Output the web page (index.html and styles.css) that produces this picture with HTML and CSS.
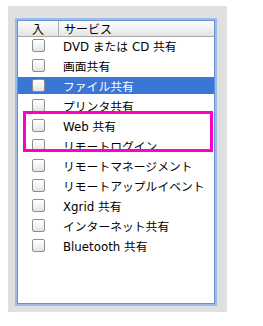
FILE: index.html
```html
<!DOCTYPE html>
<html lang="ja">

<head>
    <meta charset="UTF-8">
    <title>サービス</title>
    <link rel="stylesheet" href="styles.css">
</head>

<body>
    <div class="panel">
        <div class="list">
            <div class="head">
                <div class="col-on">入</div>
                <div class="col-name">サービス</div>
            </div>
            <ul class="rows">
                <li><span class="box"></span><span class="name">DVD または CD 共有</span></li>
                <li><span class="box"></span><span class="name">画面共有</span></li>
                <li class="sel"><span class="box"></span><span class="name">ファイル共有</span></li>
                <li><span class="box"></span><span class="name">プリンタ共有</span></li>
                <li><span class="box"></span><span class="name">Web 共有</span></li>
                <li><span class="box"></span><span class="name">リモートログイン</span></li>
                <li><span class="box"></span><span class="name">リモートマネージメント</span></li>
                <li><span class="box"></span><span class="name">リモートアップルイベント</span></li>
                <li><span class="box"></span><span class="name">Xgrid 共有</span></li>
                <li><span class="box"></span><span class="name">インターネット共有</span></li>
                <li><span class="box"></span><span class="name">Bluetooth 共有</span></li>
            </ul>
        </div>
    </div>
    <div class="mark"></div>
</body>

</html>
```

FILE: styles.css
```css
body {
    margin: 0;
    background: #fff;
    font-family: "DejaVu Sans", "Noto Sans CJK JP", sans-serif;
    font-size: 11.8px;
    color: #000;
    position: relative;
}

.panel {
    margin: 6px 0 0 8px;
    width: 219px;
    height: 306px;
    box-sizing: border-box;
    padding: 14px 0 0 9px;
    background: #e0e0e0;
}

.list {
    width: 196px;
    height: 282px;
    background: #fff;
    border: 1px solid #6792d0;
    box-shadow: 0 0 0 2px #9dbbe5;
}

.head {
    display: flex;
    height: 15px;
    line-height: 15px;
    border-bottom: 1px solid #a9a9a9;
    background: linear-gradient(#fdfdfd, #f2f2f2 50%, #e4e4e4);
    font-family: "Noto Sans CJK JP", sans-serif;
    font-size: 12px;
}

.col-on {
    width: 40px;
    text-align: center;
    border-right: 1px solid #b0b0b0;
}

.col-name {
    padding-left: 5px;
}

.rows {
    margin: 0;
    padding: 0;
    list-style: none;
    display: flex;
    flex-direction: column;
    gap: 3px;
}

.rows li {
    display: flex;
    align-items: center;
    height: 17px;
}

.rows li.sel {
    background: #3a76d6;
    color: #fff;
}

.box {
    width: 11px;
    height: 11px;
    margin-left: 14px;
    border: 1px solid #8e8e8e;
    border-radius: 2px;
    background: linear-gradient(#ffffff, #f4f4f4 50%, #e2e2e2);
    box-shadow: inset 0 1px 0 #fff;
}

.name {
    margin-left: 18px;
    white-space: nowrap;
}

.mark {
    position: absolute;
    left: 23px;
    top: 111px;
    width: 184px;
    height: 35px;
    border: 3px solid #ff00c8;
}
```
